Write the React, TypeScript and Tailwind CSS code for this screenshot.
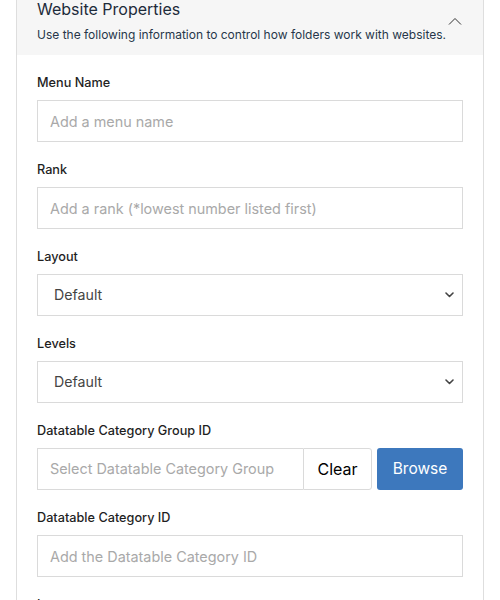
import { useState } from "react";

const font = { fontFamily: "Inter, 'Noto Sans', sans-serif" };

const ChevronDown = () => (
  <svg width="9" height="6" viewBox="0 0 9 6" fill="none" className="pointer-events-none absolute right-[9px] top-1/2 -translate-y-1/2">
    <path d="M1 1l3.5 3.5L8 1" stroke="#444" strokeWidth="1.6" strokeLinecap="round" strokeLinejoin="round" />
  </svg>
);

function Field({ label, children }: { label: string; children: React.ReactNode }) {
  return (
    <div className="flex flex-col">
      <label className="mb-[7px] pt-px text-[12.7px] leading-5 font-medium text-[#1f1f1f]">{label}</label>
      {children}
    </div>
  );
}

function TextInput({ placeholder }: { placeholder: string }) {
  return (
    <input
      type="text"
      placeholder={placeholder}
      className="h-[42px] w-full border border-[#dadada] bg-white px-3 text-[14.4px] text-[#333] outline-none placeholder:text-[#a9a9a9]"
    />
  );
}

function Select({ value }: { value: string }) {
  return (
    <div className="relative">
      <select
        defaultValue={value}
        className="h-[42px] w-full appearance-none border border-[#dadada] bg-white pl-4 pr-8 text-[14.2px] text-[#444] outline-none"
      >
        <option>Default</option>
      </select>
      <ChevronDown />
    </div>
  );
}

export default function App() {
  const [open, setOpen] = useState(true);

  return (
    <div className="min-h-screen bg-white px-4" style={font}>
      <div className="border-x border-b border-[#dedede]">
        {/* Header */}
        <div className="flex h-[55px] items-start justify-between bg-[#f6f6f6] px-5">
          <div className="flex flex-col">
            <h2 className="-mt-px text-[16px] leading-5 text-[#1d2b3a]">Website Properties</h2>
            <p className="mt-[6px] text-[12px] leading-5 text-[#27364a]">
              Use the following information to control how folders work with websites.
            </p>
          </div>
          <button onClick={() => setOpen(!open)} className="mt-[17px] mr-[1px]">
            <svg width="14" height="8" viewBox="0 0 14 8" fill="none">
              <path d="M1 7.5L7 1.5l6 6" stroke="#333" strokeWidth="1" />
            </svg>
          </button>
        </div>

        {/* Body */}
        {open && (
          <div className="flex flex-col gap-[17px] px-5 pt-[17px] pb-6">
            <Field label="Menu Name">
              <TextInput placeholder="Add a menu name" />
            </Field>
            <Field label="Rank">
              <TextInput placeholder="Add a rank (*lowest number listed first)" />
            </Field>
            <Field label="Layout">
              <Select value="Default" />
            </Field>
            <Field label="Levels">
              <Select value="Default" />
            </Field>
            <Field label="Datatable Category Group ID">
              <div className="flex h-[42px]">
                <input
                  type="text"
                  placeholder="Select Datatable Category Group"
                  className="min-w-0 flex-1 border border-r-0 border-[#dadada] bg-white px-3 text-[14.4px] outline-none placeholder:text-[#a9a9a9]"
                />
                <button className="w-[69px] rounded-r-[3px] border border-[#dadada] bg-white text-[16px] text-black">
                  Clear
                </button>
                <button className="ml-[5px] w-[86px] rounded-[3px] bg-[#3d78bd] text-[15.5px] text-white">
                  Browse
                </button>
              </div>
            </Field>
            <Field label="Datatable Category ID">
              <TextInput placeholder="Add the Datatable Category ID" />
            </Field>
            <Field label="Language">
              <TextInput placeholder="Add a language" />
            </Field>
          </div>
        )}
      </div>
    </div>
  );
}
